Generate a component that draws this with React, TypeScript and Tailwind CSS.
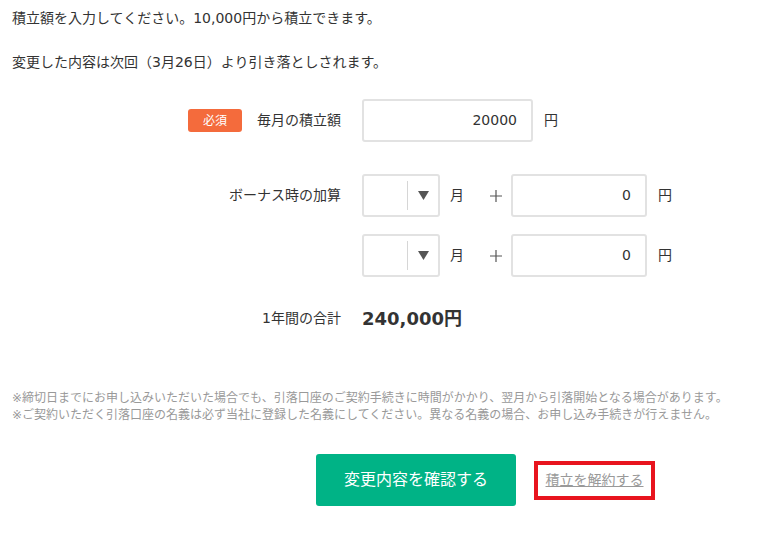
const font = { fontFamily: '"DejaVu Sans", "Noto Sans CJK JP", sans-serif' };

const SelectBox = () => (
    <div className="flex h-[43px] w-[78px] items-center rounded-[3px] border-2 border-[#e2e2e2] bg-white">
        <div className="h-full flex-1" />
        <div className="h-[29px] w-px bg-[#d6d6d6]" />
        <div className="flex w-[30px] justify-center">
            <svg width="11" height="9" viewBox="0 0 11 9">
                <polygon points="0,0 11,0 5.5,9" fill="#555" />
            </svg>
        </div>
    </div>
);

const AmountInput = ({ value, width }: { value: string; width: string }) => (
    <div className={`flex h-[43px] ${width} items-center justify-end rounded-[3px] border-2 border-[#e2e2e2] bg-white pr-[14px] text-[14px] text-[#333]`}>
        {value}
    </div>
);

const BonusRow = () => (
    <div className="flex items-center">
        <SelectBox />
        <span className="ml-[10px] text-[14px] text-[#333]">月</span>
        <svg className="ml-[26px]" width="12" height="12" viewBox="0 0 12 12">
            <path d="M6 0V12M0 6H12" stroke="#555" strokeWidth="1.2" />
        </svg>
        <div className="ml-[9px]">
            <AmountInput value="0" width="w-[136px]" />
        </div>
        <span className="ml-[11px] text-[14px] text-[#333]">円</span>
    </div>
);

const App = () => {
    return (
        <div className="min-h-[533px] w-[757px] bg-white text-[#333]" style={font}>
            <div className="px-[12px] pt-[6px] text-[14px] leading-[24px]">
                <p>積立額を入力してください。10,000円から積立できます。</p>
                <p className="mt-[20px]">変更した内容は次回（3月26日）より引き落としされます。</p>
            </div>

            {/* monthly amount */}
            <div className="mt-[25px] flex items-center">
                <div className="flex w-[341px] items-center justify-end">
                    <span className="flex h-[23px] w-[54px] items-center justify-center rounded-[3px] bg-[#f46b3c] text-[12px] text-white">必須</span>
                    <span className="ml-[15px] text-[14px]">毎月の積立額</span>
                </div>
                <div className="ml-[21px]">
                    <AmountInput value="20000" width="w-[171px]" />
                </div>
                <span className="ml-[11px] text-[14px]">円</span>
            </div>

            {/* bonus */}
            <div className="mt-[32px] flex">
                <div className="w-[341px] pt-[11px] text-right text-[14px]">ボーナス時の加算</div>
                <div className="ml-[21px] flex flex-col gap-[17px]">
                    <BonusRow />
                    <BonusRow />
                </div>
            </div>

            {/* yearly total */}
            <div className="mt-[28px] flex items-center">
                <div className="w-[341px] text-right text-[14px]">1年間の合計</div>
                <div className="ml-[21px] text-[18px] font-bold">240,000円</div>
            </div>

            <div className="mt-[58px] px-[12px] text-[12px] leading-[17px] text-[#999]">
                <p>※締切日までにお申し込みいただいた場合でも、引落口座のご契約手続きに時間がかかり、翌月から引落開始となる場合があります。</p>
                <p>※ご契約いただく引落口座の名義は必ず当社に登録した名義にしてください。異なる名義の場合、お申し込み手続きが行えません。</p>
            </div>

            <div className="mt-[30px] flex items-center">
                <button className="ml-[316px] h-[52px] w-[200px] rounded-[3px] bg-[#00b386] text-[16px] text-white">変更内容を確認する</button>
                <div className="ml-[18px] flex h-[39px] w-[121px] items-center justify-center border-[4px] border-[#e8141e]">
                    <a className="text-[14px] text-[#999] underline">積立を解約する</a>
                </div>
            </div>
        </div>
    );
};

export default App;
